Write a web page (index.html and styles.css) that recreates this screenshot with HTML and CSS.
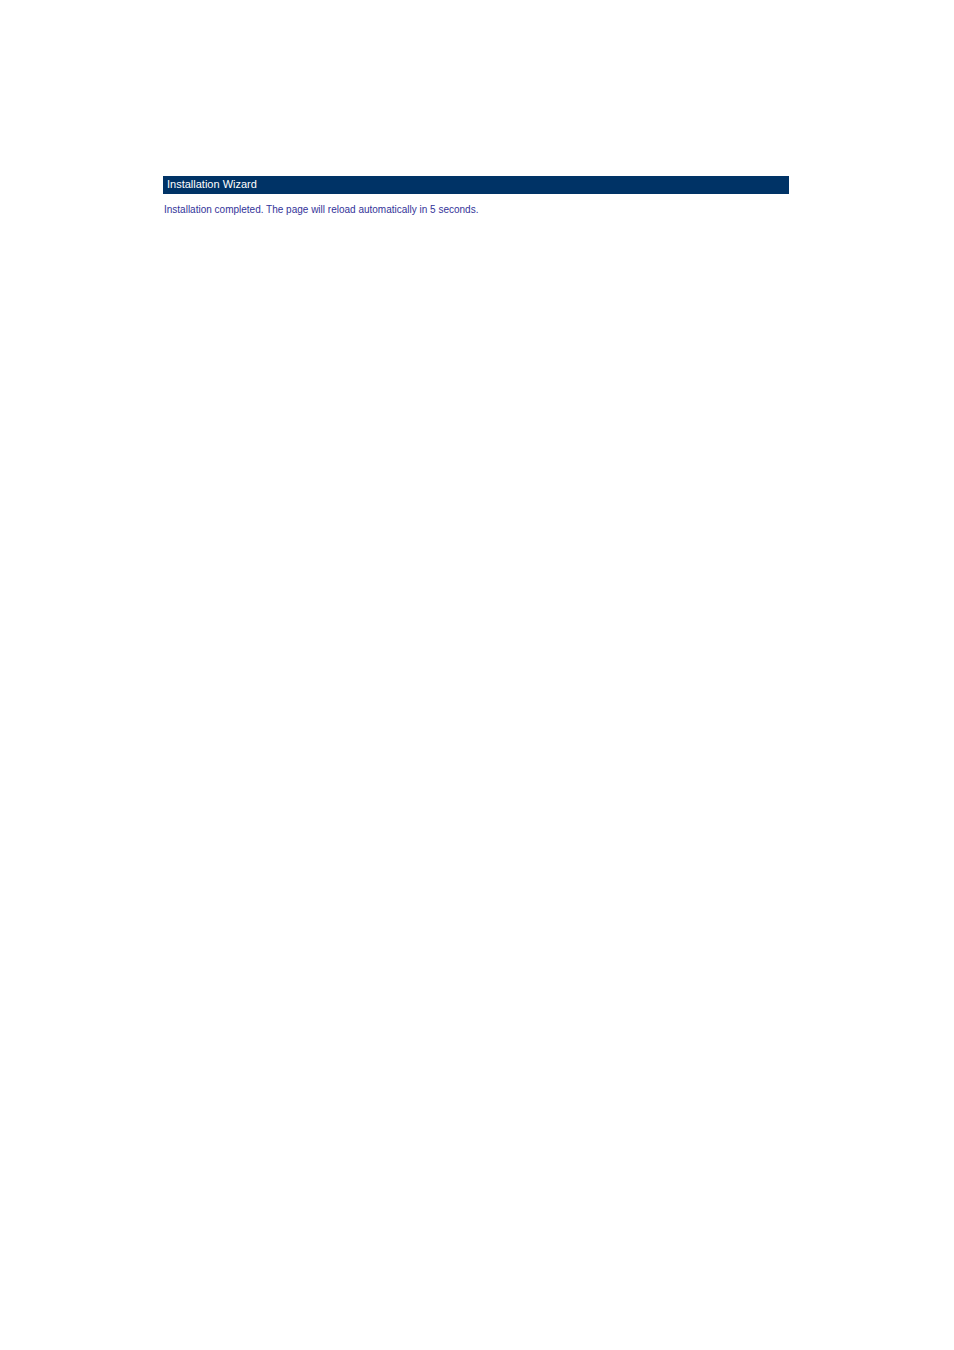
FILE: index.html
```html
<!DOCTYPE html>
<html lang="en">
<head>
    <meta charset="UTF-8">
    <meta name="viewport" content="width=device-width, initial-scale=1.0">
    <title>Installation Wizard</title>
    <link rel="stylesheet" href="styles.css">
</head>
<body>
    <main class="wizard">
        <h1 class="wizard-title">Installation Wizard</h1>
        <p class="wizard-message">Installation completed. The page will reload automatically in 5 seconds.</p>
    </main>
</body>
</html>
```
FILE: styles.css
```css
body {
    margin: 0;
    background-color: #ffffff;
    font-family: "Liberation Sans", Arial, sans-serif;
}
.wizard {
    margin: 176px 165px 0 163px;
}
.wizard-title {
    margin: 0;
    padding: 0 4px 2px;
    background-color: #003366;
    color: #ffffff;
    font-size: 11px;
    font-weight: normal;
    line-height: 16px;
}
.wizard-message {
    margin: 10px 0 0;
    padding: 0 1px;
    color: #333399;
    font-size: 10px;
    line-height: 12px;
}
```
